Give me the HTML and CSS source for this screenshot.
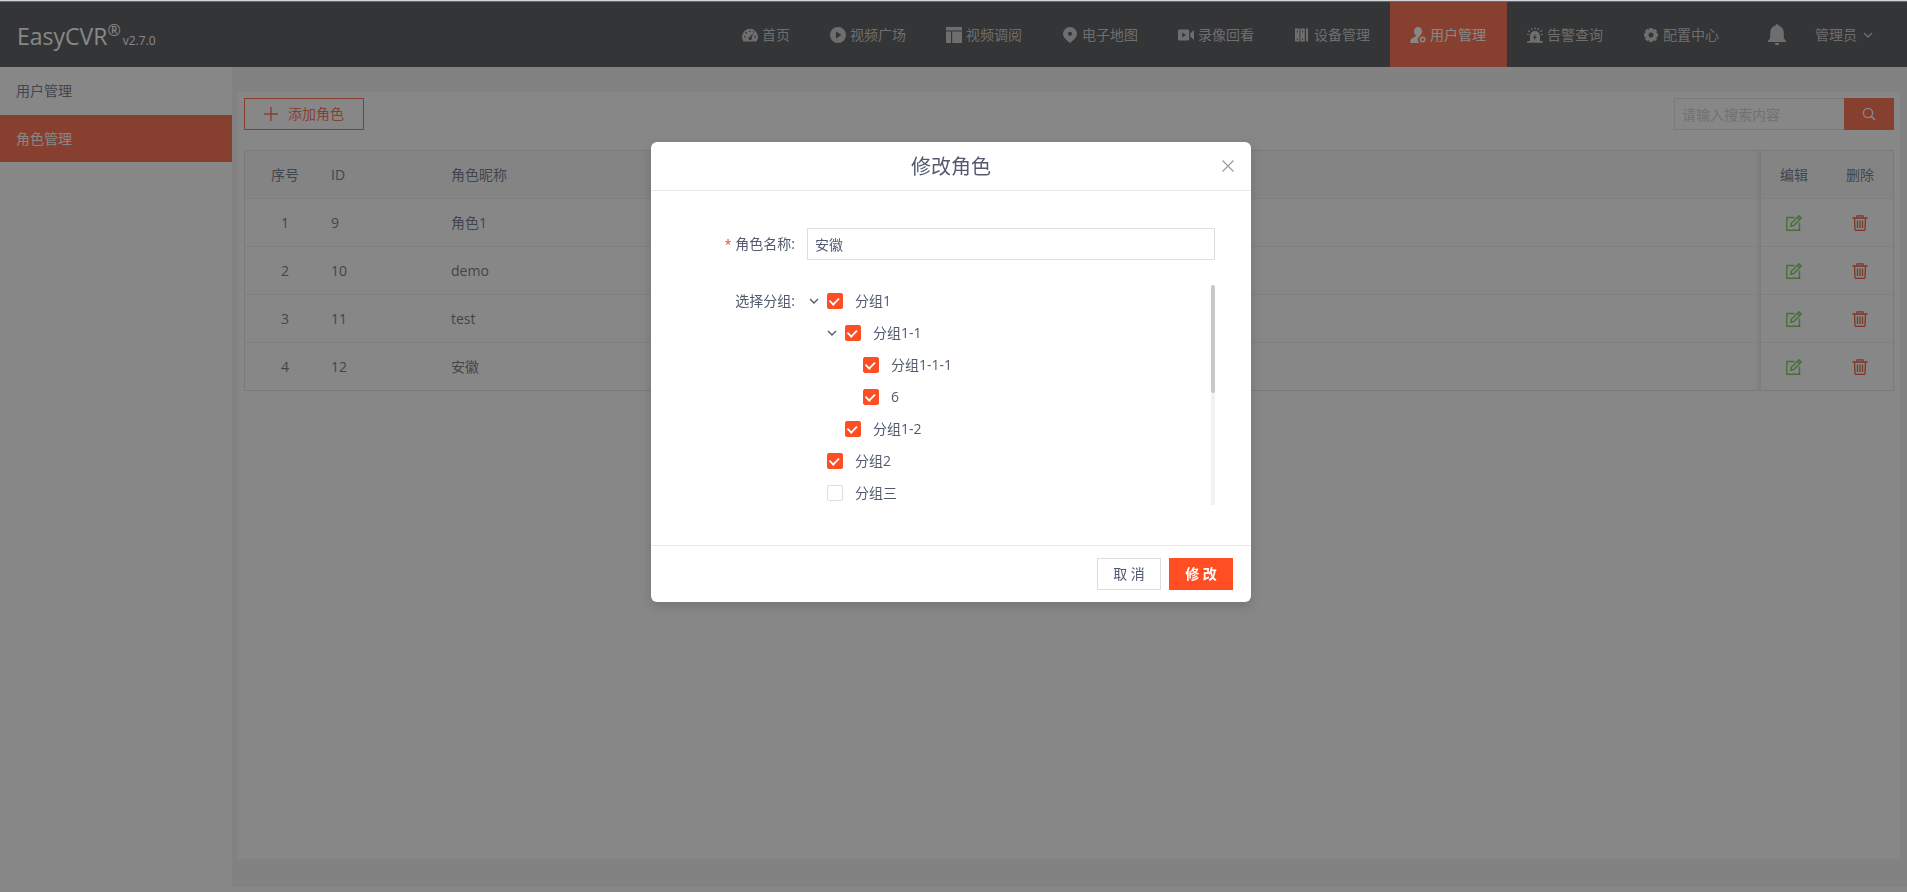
FILE: index.html
```html
<!DOCTYPE html>
<html lang="zh-CN">
<head>
    <meta charset="UTF-8">
    <meta name="viewport" content="width=device-width, initial-scale=1.0">
    <title>EasyCVR</title>
    <link rel="stylesheet" href="styles.css">
</head>
<body>
    <!-- shared icons -->
    <svg class="sprite" aria-hidden="true">
        <symbol id="icon-edit" viewBox="0 0 16 16">
            <path d="M8.500 2.500H.8v12.700h12.700V7.500" fill="none" stroke="currentColor" stroke-width="1.400"/>
            <path d="M4.800 11.200l.7-3.100L13 .8l2.200 2.200L7.900 10.400z M11.400 2.400l2.200 2.200" fill="none" stroke="currentColor" stroke-width="1.400"/>
        </symbol>
        <symbol id="icon-trash" viewBox="0 0 16 16">
            <path d="M.5 3h15M5 3V.8h6V3M2.500 3l.5 11.200q.1 1.200 1.200 1.200h7.600q1.100 0 1.200-1.200L13.500 3M5.500 5.500v7.500M8 5.500v7.500M10.500 5.500v7.500" fill="none" stroke="currentColor" stroke-width="1.300"/>
        </symbol>
        <symbol id="icon-down" viewBox="0 0 10 10">
            <path d="M1 3l4 4 4-4" fill="none" stroke="currentColor" stroke-width="1.400"/>
        </symbol>
    </svg>

    <header class="header">
        <div class="logo">EasyCVR<sup>®</sup><span class="version">v2.7.0</span></div>
        <nav class="nav">
            <a href="#" class="nav-item">
                <svg viewBox="0 0 16 16"><path fill="currentColor" fill-rule="evenodd" d="M1.500 14.500A8 8 0 1 1 14.500 14.500zM7 10.500a1.600 1.600 0 1 0 2.600.2L11.500 6zM7.300 3.500h1.400v1.400H7.300zM3.600 5h1.400v1.400H3.600zM2 9h1.400v1.400H2zM12.600 9H14v1.400h-1.400zM11 4.200h1.200v1.200H11z"/></svg>
                首页
            </a>
            <a href="#" class="nav-item">
                <svg viewBox="0 0 16 16"><path fill="currentColor" fill-rule="evenodd" d="M8 0a8 8 0 1 0 0 16A8 8 0 0 0 8 0zM6 4.500L11.500 8 6 11.500z"/></svg>
                视频广场
            </a>
            <a href="#" class="nav-item">
                <svg viewBox="0 0 16 16"><path fill="currentColor" d="M0 0h16v3.500H0zM0 4.500h5V16H0zM6.200 4.500H16V16H6.200z"/></svg>
                视频调阅
            </a>
            <a href="#" class="nav-item">
                <svg viewBox="0 0 16 16"><path fill="currentColor" fill-rule="evenodd" d="M8 0a7 7 0 0 0-7 6.800C1 10.500 5 13.500 8 16c3-2.500 7-5.500 7-9.200A7 7 0 0 0 8 0zM8 4.700a2 2 0 1 1 0 4 2 2 0 0 1 0-4z"/></svg>
                电子地图
            </a>
            <a href="#" class="nav-item">
                <svg viewBox="0 0 16 16"><path fill="currentColor" fill-rule="evenodd" d="M1.200 2.500H10q1.200 0 1.200 1.200v8.600q0 1.200-1.200 1.200H1.200Q0 13.500 0 12.300V3.700q0-1.200 1.200-1.200zM4.200 5.500v5l3.800-2.500zM12.300 6.500L16 3v10l-3.700-3.500z"/></svg>
                录像回看
            </a>
            <a href="#" class="nav-item">
                <svg viewBox="0 0 16 16"><path fill="currentColor" fill-rule="evenodd" d="M1 1.500h4.500v13H1zM6.300 1.500h4.500v13H6.300zM12 1.500h2v13h-2zM2.700 3.500v2h1v-2zM8 3.500v2h1v-2zM2.700 11.500v1.500h1v-1.500zM8 11.500v1.500h1v-1.500z"/></svg>
                设备管理
            </a>
            <a href="#" class="nav-item active">
                <svg viewBox="0 0 16 16"><path fill="currentColor" d="M8 0a4 4 0 0 1 4 4.200c0 1.900-.8 3-1.700 3.900v.8a4 4 0 0 0-.9 7.100H.3c0-3.500.9-4.800 5.400-6.400v-1.500C4.800 7.200 4 6.100 4 4.200A4 4 0 0 1 8 0z"/><circle cx="12.600" cy="12.600" r="2.200" fill="none" stroke="currentColor" stroke-width="1.600"/></svg>
                用户管理
            </a>
            <a href="#" class="nav-item">
                <svg viewBox="0 0 16 16"><path fill="currentColor" fill-rule="evenodd" d="M3 14V9a5 5 0 0 1 10 0v5h2.800v1.800H.2V14zM8.600 7L5.800 10.800h1.800L7 13.300l3-3.600H8.200z"/><path d="M8 .2v2.400M4.300 1l1 2M11.700 1l-1 2M.8 3.500l2 1.500M15.200 3.500l-2 1.500M0 7.500h2M14 7.500h2" stroke="currentColor" stroke-width="1.200"/></svg>
                告警查询
            </a>
            <a href="#" class="nav-item">
                <svg viewBox="0 0 16 16"><circle cx="8" cy="8" r="4.300" fill="none" stroke="currentColor" stroke-width="3.600"/><path d="M8 1v2M8 13v2M1 8h2M13 8h2M3 3l1.500 1.500M11.500 11.500L13 13M13 3l-1.500 1.500M4.500 11.500L3 13" stroke="currentColor" stroke-width="3.400"/></svg>
                配置中心
            </a>
        </nav>
        <button class="bell" aria-label="消息">
            <svg viewBox="0 0 18 22"><path fill="currentColor" d="M9 0q1.300 0 1.500 1.600Q15.500 3 15.800 8.500V14L18 17v1H0v-1l2.200-3V8.500Q2.500 3 7.500 1.600 7.700 0 9 0zM6.800 19h4.400Q11 21.200 9 21.200T6.800 19z"/></svg>
        </button>
        <button class="account">管理员<svg><use href="#icon-down"/></svg></button>
    </header>

    <div class="layout">
        <aside class="sidebar">
            <a href="#">用户管理</a>
            <a href="#" class="active">角色管理</a>
        </aside>
        <main class="main">
            <section class="panel">
                <div class="toolbar">
                    <button class="add-btn">
                        <svg viewBox="0 0 14 14"><path d="M7 0v14M0 7h14" stroke="currentColor" stroke-width="1.400"/></svg>
                        添加角色
                    </button>
                    <div class="search">
                        <input type="text" placeholder="请输入搜索内容" aria-label="搜索">
                        <button aria-label="搜索">
                            <svg viewBox="0 0 14 14"><circle cx="6" cy="6" r="4.600" fill="none" stroke="currentColor" stroke-width="1.400"/><path d="M9.300 9.300L13 13" stroke="currentColor" stroke-width="1.700"/></svg>
                        </button>
                    </div>
                </div>
                <table class="role-table">
                    <thead>
                        <tr>
                            <th class="col-index">序号</th>
                            <th class="col-id">ID</th>
                            <th class="col-name">角色昵称</th>
                            <th class="col-action">编辑</th>
                            <th class="col-action">删除</th>
                        </tr>
                    </thead>
                    <tbody>
                        <tr>
                            <td class="col-index">1</td>
                            <td>9</td>
                            <td class="col-name">角色1</td>
                            <td class="col-action"><button class="edit" aria-label="编辑"><svg><use href="#icon-edit"/></svg></button></td>
                            <td class="col-action"><button class="delete" aria-label="删除"><svg><use href="#icon-trash"/></svg></button></td>
                        </tr>
                        <tr>
                            <td class="col-index">2</td>
                            <td>10</td>
                            <td class="col-name">demo</td>
                            <td class="col-action"><button class="edit" aria-label="编辑"><svg><use href="#icon-edit"/></svg></button></td>
                            <td class="col-action"><button class="delete" aria-label="删除"><svg><use href="#icon-trash"/></svg></button></td>
                        </tr>
                        <tr>
                            <td class="col-index">3</td>
                            <td>11</td>
                            <td class="col-name">test</td>
                            <td class="col-action"><button class="edit" aria-label="编辑"><svg><use href="#icon-edit"/></svg></button></td>
                            <td class="col-action"><button class="delete" aria-label="删除"><svg><use href="#icon-trash"/></svg></button></td>
                        </tr>
                        <tr>
                            <td class="col-index">4</td>
                            <td>12</td>
                            <td class="col-name">安徽</td>
                            <td class="col-action"><button class="edit" aria-label="编辑"><svg><use href="#icon-edit"/></svg></button></td>
                            <td class="col-action"><button class="delete" aria-label="删除"><svg><use href="#icon-trash"/></svg></button></td>
                        </tr>
                    </tbody>
                </table>
            </section>
        </main>
    </div>

    <div class="mask">
        <form class="modal" role="dialog" aria-labelledby="modal-title">
            <div class="modal-header">
                <h2 id="modal-title">修改角色</h2>
                <button type="button" class="close" aria-label="关闭">
                    <svg viewBox="0 0 12 12"><path d="M.5.5l11 11M11.500.5l-11 11" stroke="currentColor" stroke-width="1.100"/></svg>
                </button>
            </div>
            <div class="modal-body">
                <div class="form-item">
                    <label class="form-label required" for="role-name">角色名称:</label>
                    <input type="text" id="role-name" class="text-input" value="安徽">
                </div>
                <div class="form-item">
                    <span class="form-label">选择分组:</span>
                    <div class="tree-box">
                        <ul class="tree">
                            <li>
                                <div class="node">
                                    <button type="button" class="arrow" aria-label="收起"><svg><use href="#icon-down"/></svg></button>
                                    <input type="checkbox" id="g1" checked><label for="g1">分组1</label>
                                </div>
                                <ul>
                                    <li>
                                        <div class="node">
                                            <button type="button" class="arrow" aria-label="收起"><svg><use href="#icon-down"/></svg></button>
                                            <input type="checkbox" id="g11" checked><label for="g11">分组1-1</label>
                                        </div>
                                        <ul>
                                            <li><div class="node leaf"><input type="checkbox" id="g111" checked><label for="g111">分组1-1-1</label></div></li>
                                            <li><div class="node leaf"><input type="checkbox" id="g6" checked><label for="g6">6</label></div></li>
                                        </ul>
                                    </li>
                                    <li><div class="node leaf"><input type="checkbox" id="g12" checked><label for="g12">分组1-2</label></div></li>
                                </ul>
                            </li>
                            <li><div class="node leaf"><input type="checkbox" id="g2" checked><label for="g2">分组2</label></div></li>
                            <li><div class="node leaf"><input type="checkbox" id="g3"><label for="g3">分组三</label></div></li>
                        </ul>
                        <div class="scroll-track"><div class="scroll-thumb"></div></div>
                    </div>
                </div>
            </div>
            <div class="modal-footer">
                <button type="button" class="btn">取 消</button>
                <button type="submit" class="btn primary">修 改</button>
            </div>
        </form>
    </div>
</body>
</html>
```
FILE: styles.css
```css
* {
    box-sizing: border-box;
}

body {
    margin: 0;
    border-top: 1px solid #d3d6d8;
    background: #fff;
    font-family: "Open Sans", "Noto Sans CJK SC", sans-serif;
    font-size: 14px;
    line-height: 20px;
    color: #515a6e;
}

button,
input {
    font: inherit;
    color: inherit;
}

button {
    padding: 0;
    border: none;
    background: none;
    cursor: pointer;
}

a {
    color: inherit;
    text-decoration: none;
}

ul {
    margin: 0;
    padding: 0;
    list-style: none;
}

svg {
    display: block;
    flex: none;
}

.sprite {
    position: absolute;
    width: 0;
    height: 0;
}

/* header */
.header {
    display: flex;
    height: 66px;
    padding: 0 34px 0 17px;
    border-top: 1px solid #b0b4b6;
    background: #2d3235;
    color: #c0c0c0;
}

.logo {
    margin-right: auto;
    padding-top: 18px;
    font-size: 23px;
    line-height: 32px;
    color: #fff;
    white-space: nowrap;
}

.logo sup {
    font-size: 16px;
    line-height: 0;
}

.version {
    margin-left: 2px;
    font-size: 12px;
}

.nav {
    display: flex;
}

.nav-item {
    display: flex;
    align-items: center;
    gap: 4px;
    padding: 0 20px;
    white-space: nowrap;
}

.nav-item svg {
    width: 16px;
    height: 16px;
}

.nav-item.active {
    width: 117px;
    background: #ff4d24;
    color: #fff;
}

.bell {
    margin: 0 29px;
}

.bell svg {
    width: 18px;
    height: 22px;
}

.account {
    display: flex;
    align-items: center;
    gap: 6px;
}

.account svg {
    width: 10px;
    height: 10px;
}

/* layout */
.layout {
    display: flex;
    min-height: calc(100vh - 67px);
}

.sidebar {
    flex: none;
    width: 232px;
    background: #fff;
}

.sidebar a {
    display: block;
    height: 48px;
    padding-left: 16px;
    border-bottom: 1px solid #fff;
    line-height: 47px;
}

.sidebar a.active {
    background: #ff4d24;
    background-clip: padding-box;
    color: #fff;
}

.main {
    flex: 1;
    display: flex;
    margin-bottom: 5px;
    padding: 25px 7px 28px 6px;
    background: #f2f2f2;
}

.panel {
    flex: 1;
    padding: 6px;
    background: #fff;
}

.toolbar {
    display: flex;
    justify-content: space-between;
    margin-bottom: 20px;
}

.add-btn {
    display: flex;
    align-items: center;
    justify-content: center;
    gap: 10px;
    width: 120px;
    height: 32px;
    border: 1px solid #ff4d24;
    color: #ff4d24;
}

.add-btn svg {
    width: 14px;
    height: 14px;
}

.search {
    display: flex;
}

.search input {
    width: 170px;
    height: 32px;
    padding: 0 7px;
    border: 1px solid #dcdee2;
    border-right: none;
}

.search input::placeholder {
    color: #c5c8ce;
}

.search button {
    display: flex;
    align-items: center;
    justify-content: center;
    width: 50px;
    background: #ff4d24;
    color: #fff;
}

.search svg {
    width: 14px;
    height: 14px;
}

.role-table {
    width: 100%;
    border: 1px solid #dcdee2;
    border-bottom: none;
    border-spacing: 0;
    table-layout: fixed;
}

.role-table th,
.role-table td {
    height: 48px;
    padding: 0 6px;
    border-bottom: 1px solid #e8eaec;
    font-weight: normal;
    text-align: left;
}

.role-table tbody tr:last-child td {
    border-bottom-color: #dcdee2;
}

.role-table th {
    background-color: #f8f8f9;
}

.role-table .col-index {
    width: 80px;
    text-align: center;
}

.col-id {
    width: 120px;
}

/* shade beside the fixed action columns */
.role-table .col-name {
    background-image: linear-gradient(to left, rgba(0, 0, 0, 0.1), transparent 6px);
}

.role-table .col-action {
    width: 66px;
    text-align: center;
}

.role-table button {
    display: block;
    margin: 0 auto;
}

.role-table svg {
    width: 16px;
    height: 16px;
}

.edit {
    color: #5bc23a;
}

.delete {
    color: #ed3014;
}

/* modal */
.mask {
    position: fixed;
    top: 1px;
    right: 0;
    bottom: 0;
    left: 0;
    display: flex;
    justify-content: center;
    align-items: flex-start;
    padding: 141px 5px 0 0;
    background: rgba(55, 55, 55, 0.6);
}

.modal {
    width: 600px;
    border-radius: 6px;
    background: #fff;
    box-shadow: 0 4px 12px rgba(0, 0, 0, 0.15);
}

.modal-header {
    position: relative;
    padding: 15px 16px 13px;
    border-bottom: 1px solid #e8eaec;
}

.modal-header h2 {
    margin: 0;
    font-size: 20px;
    line-height: 20px;
    font-weight: normal;
    text-align: center;
}

.close {
    position: absolute;
    top: 18px;
    right: 17px;
    color: #999;
}

.close svg {
    width: 12px;
    height: 12px;
}

.modal-body {
    padding: 37px 36px 40px 16px;
}

.form-item {
    display: flex;
}

.form-item + .form-item {
    margin-top: 24px;
}

.form-label {
    flex: none;
    width: 140px;
    padding-right: 12px;
    line-height: 32px;
    text-align: right;
}

.required::before {
    content: "*";
    margin-right: 4px;
    font-size: 12px;
    color: #ed4014;
}

.text-input {
    flex: 1;
    height: 32px;
    padding: 0 7px;
    border: 1px solid #dcdee2;
}

.tree-box {
    flex: 1;
    display: flex;
    justify-content: space-between;
    height: 220px;
    overflow: hidden;
}

.tree ul {
    padding-left: 18px;
}

.node {
    display: flex;
    align-items: center;
    height: 32px;
}

.node.leaf {
    padding-left: 20px;
}

.arrow {
    width: 20px;
    padding-left: 2px;
}

.arrow svg {
    width: 10px;
    height: 10px;
}

.node input {
    appearance: none;
    display: flex;
    justify-content: center;
    width: 16px;
    height: 16px;
    margin: 0 12px 0 0;
    border: 1px solid #dcdee2;
    border-radius: 2px;
    background: #fff;
}

.node input:checked {
    border-color: #ff4d24;
    background: #ff4d24;
}

.node input:checked::after {
    content: "";
    width: 5px;
    height: 8px;
    margin-top: 2px;
    border: solid #fff;
    border-width: 0 2px 2px 0;
    transform: rotate(45deg) scale(0.9);
    transform-origin: 50% 30%;
}

.scroll-track {
    width: 4px;
    background: #f2f2f2;
}

.scroll-thumb {
    height: 108px;
    border-radius: 2px;
    background: #c8c8c8;
}

.modal-footer {
    display: flex;
    justify-content: flex-end;
    gap: 8px;
    padding: 12px 18px;
    border-top: 1px solid #e8eaec;
}

.btn {
    width: 64px;
    height: 32px;
    border: 1px solid #dcdee2;
}

.btn.primary {
    border-color: #ff4d24;
    background: #ff4d24;
    font-weight: bold;
    color: #fff;
}
```
